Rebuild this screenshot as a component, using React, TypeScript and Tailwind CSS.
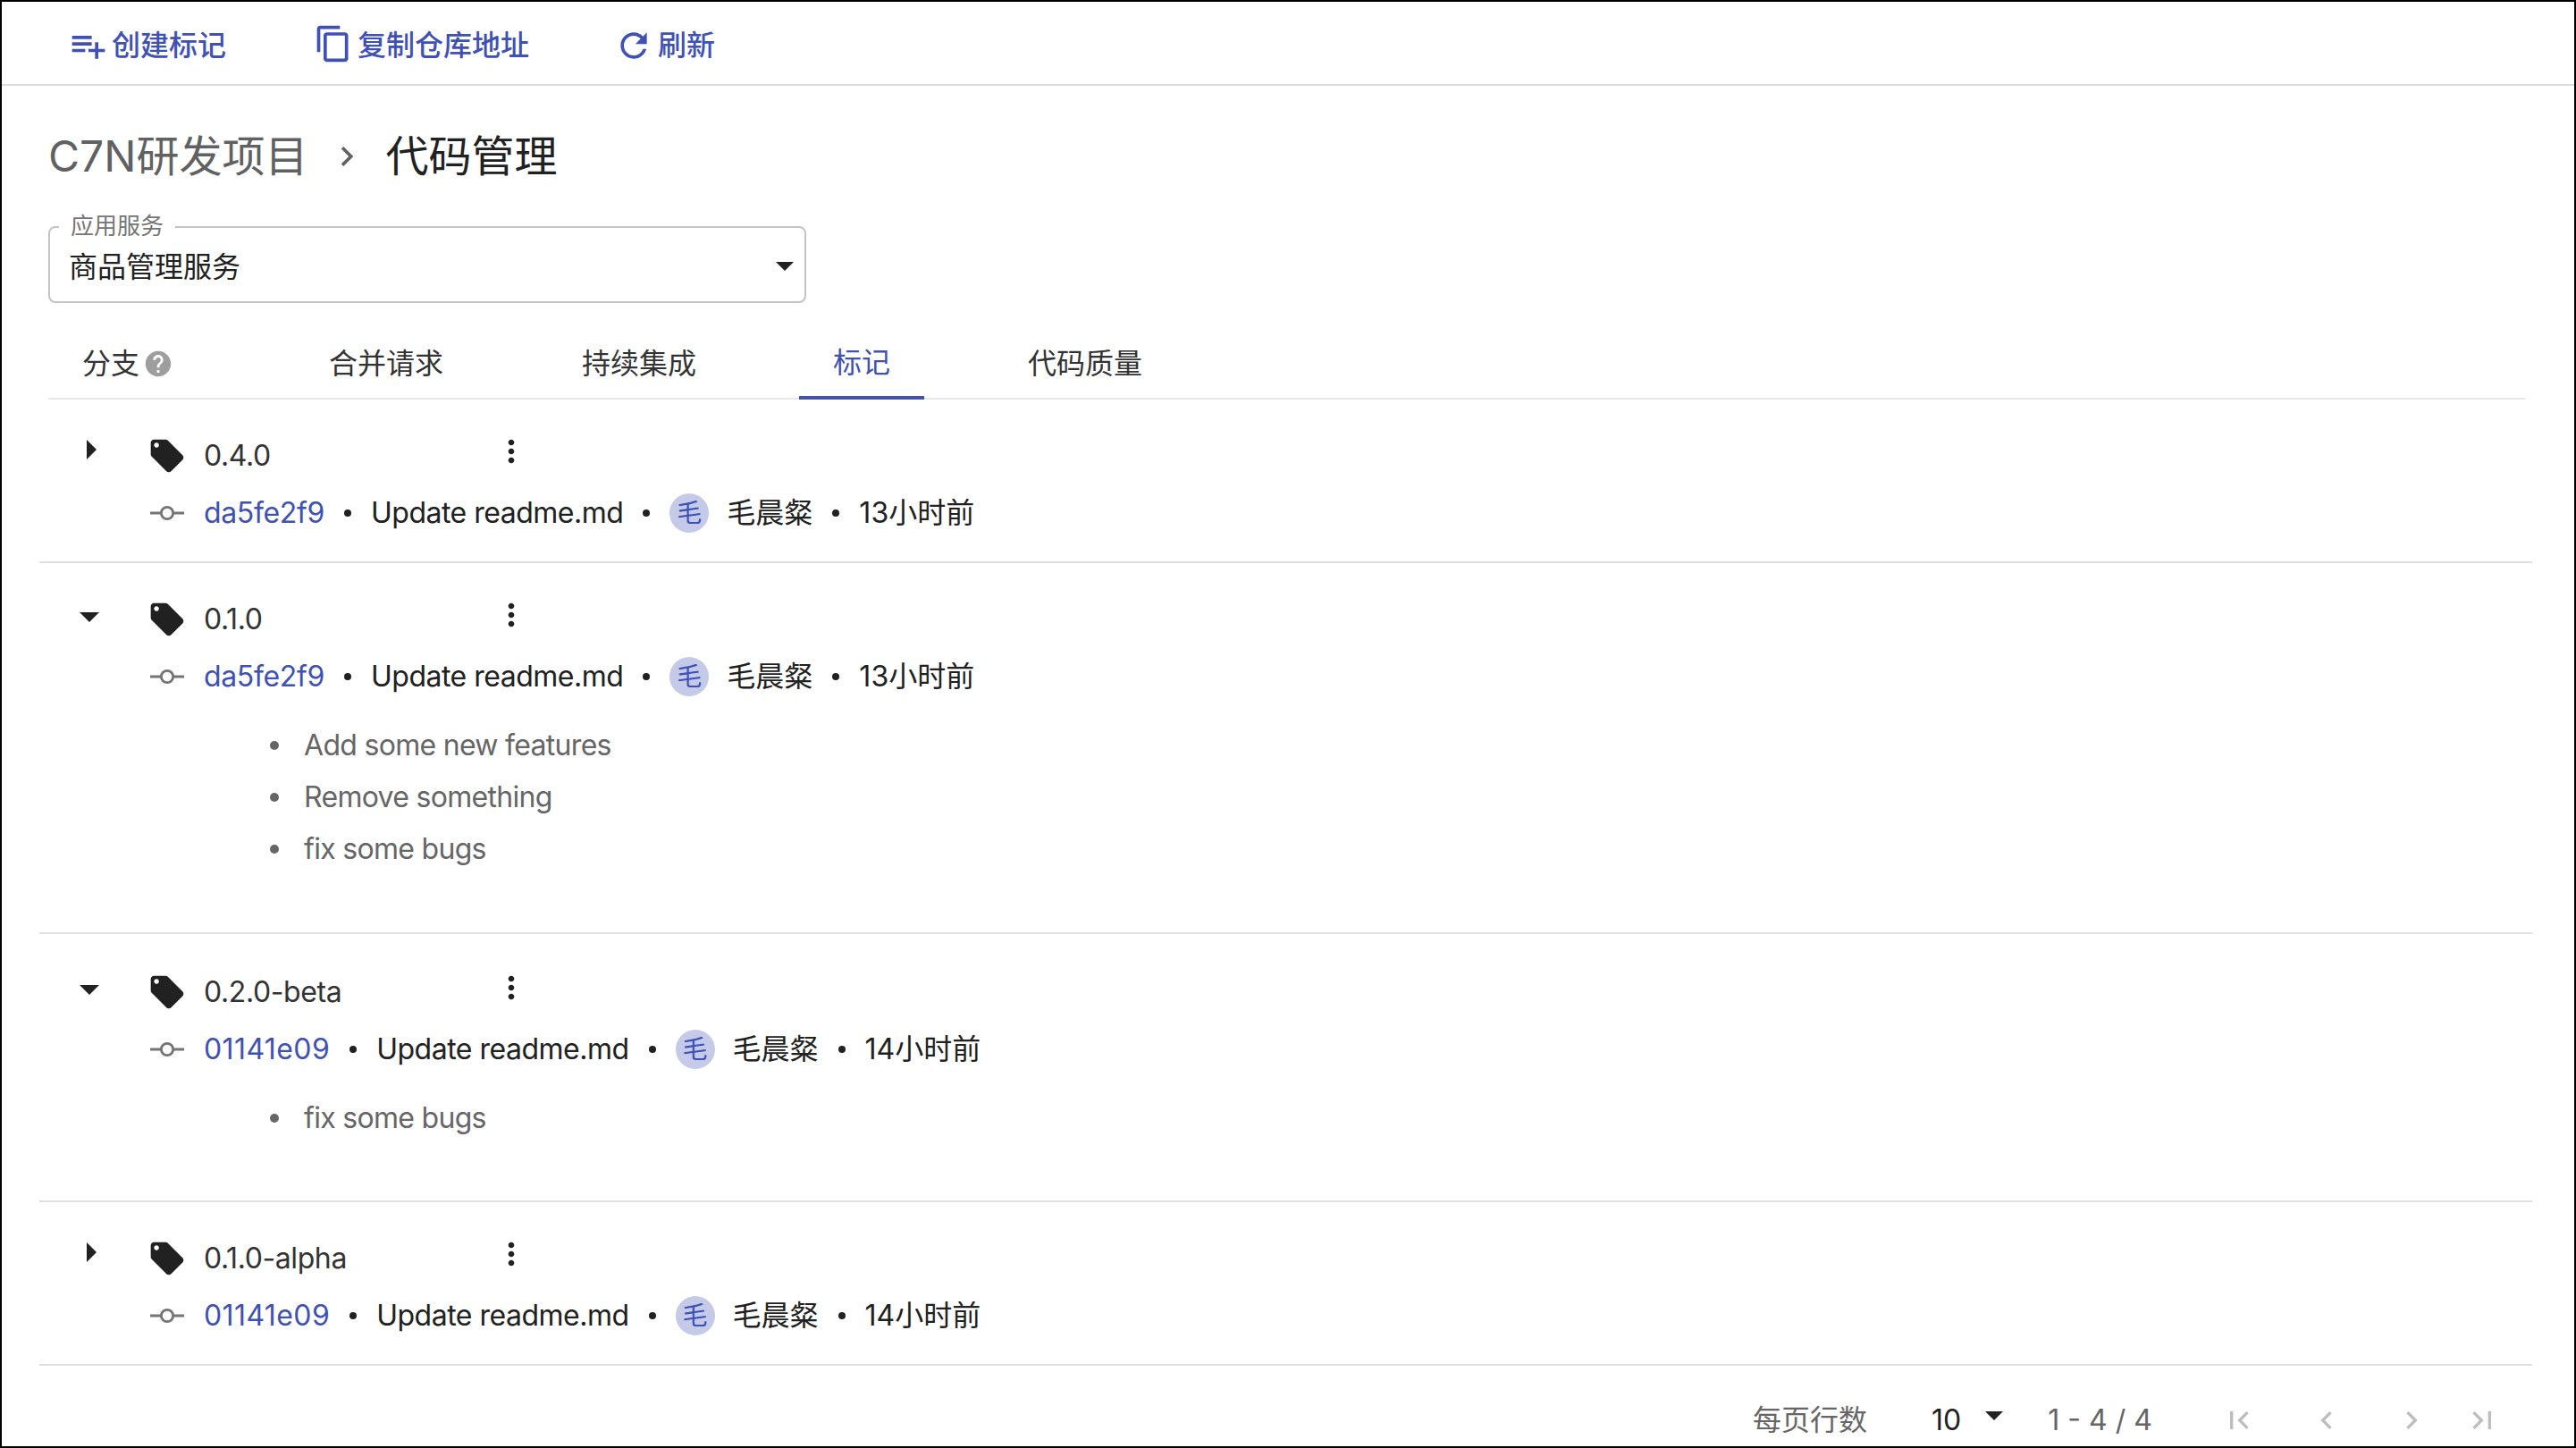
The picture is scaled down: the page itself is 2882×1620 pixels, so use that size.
const FONT = "font-['Inter','Noto_Sans_CJK_SC',sans-serif]";

function MuiIcon({ d, className }: { d: string; className: string }) {
  return (
    <svg viewBox="0 0 24 24" fill="currentColor" className={className}>
      <path d={d} />
    </svg>
  );
}

const PATHS = {
  playlistAdd: "M14 10H2v2h12v-2zm0-4H2v2h12V6zm4 8v-4h-2v4h-4v2h4v4h2v-4h4v-2h-4zM2 16h8v-2H2v2z",
  copy: "M16 1H4c-1.1 0-2 .9-2 2v14h2V3h12V1zm3 4H8c-1.1 0-2 .9-2 2v14c0 1.1.9 2 2 2h11c1.1 0 2-.9 2-2V7c0-1.1-.9-2-2-2zm0 16H8V7h11v14z",
  refresh: "M17.65 6.35C16.2 4.9 14.21 4 12 4c-4.42 0-7.99 3.58-7.99 8s3.57 8 7.99 8c3.73 0 6.84-2.55 7.73-6h-2.08c-.82 2.33-3.04 4-5.65 4-3.31 0-6-2.69-6-6s2.69-6 6-6c1.66 0 3.14.69 4.22 1.78L13 11h7V4l-2.35 2.35z",
  help: "M12 2C6.48 2 2 6.48 2 12s4.48 10 10 10 10-4.48 10-10S17.52 2 12 2zm1 17h-2v-2h2v2zm2.07-7.75l-.9.92C13.45 12.9 13 13.5 13 15h-2v-.5c0-1.1.45-2.1 1.17-2.83l1.24-1.26c.37-.36.59-.86.59-1.41 0-1.1-.9-2-2-2s-2 .9-2 2H8c0-2.21 1.79-4 4-4s4 1.79 4 4c0 .88-.36 1.68-.93 2.25z",
  tag: "M21.41 11.58l-9-9C12.05 2.22 11.55 2 11 2H4c-1.1 0-2 .9-2 2v7c0 .55.22 1.05.59 1.42l9 9c.36.36.86.58 1.41.58.55 0 1.05-.22 1.41-.59l7-7c.37-.36.59-.86.59-1.41 0-.55-.23-1.06-.59-1.42zM5.5 7C4.67 7 4 6.33 4 5.5S4.67 4 5.5 4 7 4.67 7 5.5 6.33 7 5.5 7z",
  more: "M12 8c1.1 0 2-.9 2-2s-.9-2-2-2-2 .9-2 2 .9 2 2 2zm0 2c-1.1 0-2 .9-2 2s.9 2 2 2 2-.9 2-2-.9-2-2-2zm0 6c-1.1 0-2 .9-2 2s.9 2 2 2 2-.9 2-2-.9-2-2-2z",
  first: "M18.41 16.59L13.82 12l4.59-4.59L17 6l-6 6 6 6zM6 6h2v12H6z",
  prev: "M15.41 7.41L14 6l-6 6 6 6 1.41-1.41L10.83 12z",
  next: "M10 6L8.59 7.41 13.17 12l-4.58 4.59L10 18l6-6z",
  last: "M5.59 7.41L10.18 12l-4.59 4.59L7 18l6-6-6-6zM16 6h2v12h-2z",
};

function CommitIcon() {
  return (
    <svg viewBox="0 0 40 24" className="w-[38px] h-[24px] text-[#757575]" fill="none" stroke="currentColor" strokeWidth="3">
      <circle cx="20" cy="12" r="7" />
      <path d="M0 12h13M27 12h13" />
    </svg>
  );
}

function Sep() {
  return <span className="w-[8px] h-[8px] rounded-full bg-[#212121] mx-[22px] shrink-0" />;
}

type Tag = {
  name: string;
  hash: string;
  hashTracking: string;
  time: string;
  open: boolean;
  notes: string[];
  pad: string;
};

const TAGS: Tag[] = [
  { name: "0.4.0", hash: "da5fe2f9", hashTracking: "tracking-[-0.35px]", time: "13小时前", open: false, notes: [], pad: "pt-[31px] pb-[22px]" },
  { name: "0.1.0", hash: "da5fe2f9", hashTracking: "tracking-[-0.35px]", time: "13小时前", open: true, notes: ["Add some new features", "Remove something", "fix some bugs"], pad: "pt-[31px] pb-[64px]" },
  { name: "0.2.0-beta", hash: "01141e09", hashTracking: "tracking-[0.4px]", time: "14小时前", open: true, notes: ["fix some bugs"], pad: "pt-[33px] pb-[63px]" },
  { name: "0.1.0-alpha", hash: "01141e09", hashTracking: "tracking-[0.4px]", time: "14小时前", open: false, notes: [], pad: "pt-[31px] pb-[22px]" },
];

function TagRow({ tag }: { tag: Tag }) {
  return (
    <div className={`border-b-2 border-[#e0e0e0] ${tag.pad}`}>
      <div className="flex items-center h-[64px]">
        {tag.open ? (
          <div className="w-[122px] flex pl-[45px]">
            <svg viewBox="0 0 22 11" className="w-[22px] h-[11px] -mt-[6px]" fill="#212121">
              <path d="M0 0h22L11 11z" />
            </svg>
          </div>
        ) : (
          <div className="w-[122px] flex pl-[53px]">
            <svg viewBox="0 0 11 22" className="w-[11px] h-[22px] -mt-[15px]" fill="#212121">
              <path d="M0 0l11 11L0 22z" />
            </svg>
          </div>
        )}
        <MuiIcon d={PATHS.tag} className="w-[44px] h-[44px] text-[#212121] -ml-[1px]" />
        <span className="ml-[19px] w-[324px] text-[32px] leading-[40px] tracking-[-0.4px] text-[#333333]">{tag.name}</span>
        <MuiIcon d={PATHS.more} className="w-[40px] h-[40px] text-[#212121] -mt-[10px]" />
      </div>
      <div className="flex items-center h-[64px] text-[32px] leading-[40px] text-[#212121]">
        <div className="w-[124px]" />
        <CommitIcon />
        <a className={`ml-[22px] text-[#3f51b5] ${tag.hashTracking}`}>{tag.hash}</a>
        <Sep />
        <span className="tracking-[-0.5px]">Update readme.md</span>
        <Sep />
        <span className="w-[44px] h-[44px] rounded-full bg-[#c5cae9] text-[#3f51b5] text-[28px] flex items-center justify-center shrink-0">毛</span>
        <span className="ml-[20px]">毛晨粲</span>
        <Sep />
        <span>{tag.time}</span>
      </div>
      {tag.notes.length > 0 && (
        <ul className="mt-[16px] ml-[258px] text-[32px] leading-[58px] tracking-[-0.7px] text-[#666666]">
          {tag.notes.map((n) => (
            <li key={n} className="flex items-center">
              <span className="w-[10px] h-[10px] rounded-full bg-[#666666] mr-[28px]" />
              {n}
            </li>
          ))}
        </ul>
      )}
    </div>
  );
}

function ToolButton({ icon, label, iconClass, className }: { icon: string; label: string; iconClass: string; className: string }) {
  return (
    <div className={`flex items-center ${className}`}>
      <MuiIcon d={icon} className={iconClass} />
      <span>{label}</span>
    </div>
  );
}

export default function App() {
  return (
    <div className={`${FONT} w-[2882px] h-[1620px] overflow-hidden bg-white border-2 border-black text-[#212121]`}>
      <div className="h-[94px] border-b-2 border-[#dcdcdc] flex items-center pl-[75px] pt-[5px] text-[32px] leading-[40px] font-medium text-[#3f51b5]">
        <ToolButton icon={PATHS.playlistAdd} label="创建标记" iconClass="w-[44px] h-[44px] mr-[4px]" className="" />
        <ToolButton icon={PATHS.copy} label="复制仓库地址" iconClass="w-[44px] h-[44px] mr-[5px] -mt-[4px]" className="ml-[98px]" />
        <ToolButton icon={PATHS.refresh} label="刷新" iconClass="w-[44px] h-[44px] mr-[5px]" className="ml-[95px]" />
      </div>

      <div className="pl-[52px] pr-[55px]">
        <div className="flex items-center h-[60px] mt-[49px] text-[48px] leading-[60px]">
          <span className="text-[#616161]">C7N研发项目</span>
          <MuiIcon d={PATHS.next} className="w-[44px] h-[44px] ml-[22px] mr-[21px] text-[#616161]" />
          <span className="text-[#212121]">代码管理</span>
        </div>

        <div className="relative mt-[48px] w-[848px] h-[86px] rounded-[8px] border-2 border-[#c4c4c4] flex items-center pl-[21px] pt-[5px] text-[32px] leading-[40px] text-[#212121]">
          <span>商品管理服务</span>
          <svg viewBox="0 0 20 10" className="absolute right-[12px] top-[38px] w-[20px] h-[10px]" fill="#212121">
            <path d="M0 0h20L10 10z" />
          </svg>
          <span className="absolute left-[10px] -top-[17px] px-[13px] bg-white text-[26px] leading-[30px] text-[#757575]">应用服务</span>
        </div>

        <div className="mt-[26px] h-[82px] pt-[4px] border-b-2 border-[#e8e8e8] flex items-stretch text-[32px] text-[#333333]">
          <div className="flex items-center pl-[38px] pr-[40px] w-[274px]">
            <span>分支</span>
            <MuiIcon d={PATHS.help} className="w-[34px] h-[34px] ml-[4px] text-[#9e9e9e]" />
          </div>
          <div className="flex items-center px-[40px]">合并请求</div>
          <div className="flex items-center px-[40px] ml-[75px]">持续集成</div>
          <div className="flex items-center px-[38px] ml-[75px] text-[#3f51b5] border-b-[4px] border-[#3f51b5] -mb-[2px]">标记</div>
          <div className="flex items-center px-[40px] ml-[76px]">代码质量</div>
        </div>
      </div>

      <div className="pl-[42px] pr-[47px]">
        {TAGS.map((t) => (
          <TagRow key={t.name} tag={t} />
        ))}
      </div>

      <div className="flex items-center h-[60px] mt-[31px] pl-[1959px] text-[32px] leading-[40px] text-[#666666]">
        <span>每页行数</span>
        <span className="ml-[72px] text-[#212121]">10</span>
        <svg viewBox="0 0 20 10" className="ml-[27px] -mt-[10px] w-[20px] h-[10px]" fill="#212121">
          <path d="M0 0h20L10 10z" />
        </svg>
        <span className="ml-[50px]">1 - 4 / 4</span>
        <div className="flex items-center ml-[77px] text-[#bdbdbd]">
          <MuiIcon d={PATHS.first} className="w-[40px] h-[40px]" />
          <MuiIcon d={PATHS.prev} className="w-[40px] h-[40px] ml-[58px]" />
          <MuiIcon d={PATHS.next} className="w-[40px] h-[40px] ml-[55px]" />
          <MuiIcon d={PATHS.last} className="w-[40px] h-[40px] ml-[39px]" />
        </div>
      </div>
    </div>
  );
}
